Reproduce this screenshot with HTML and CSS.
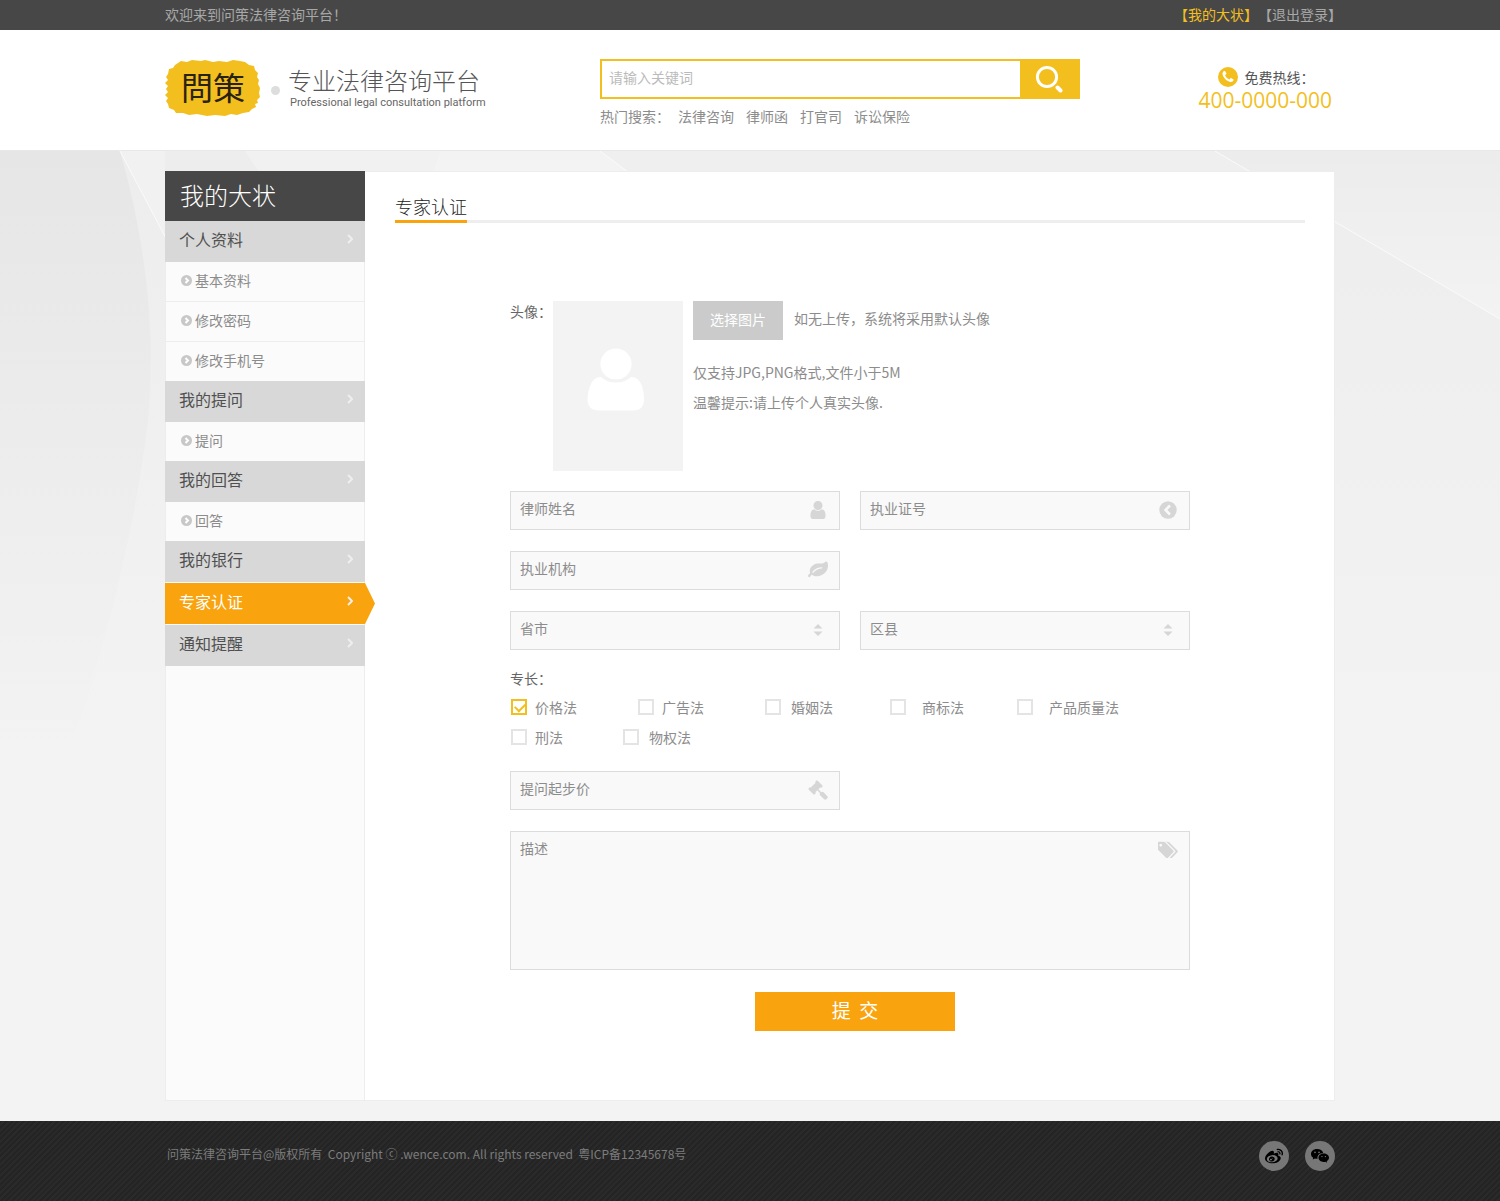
FILE: index.html
```html
<!DOCTYPE html>
<html lang="zh-CN">
<head>
    <meta charset="UTF-8">
    <meta name="viewport" content="width=device-width, initial-scale=1.0">
    <title>专家认证 - 问策法律咨询平台</title>
    <link rel="stylesheet" href="styles.css">
</head>
<body>
    <div class="topbar">
        <div class="container topbar-inner">
            <span>欢迎来到问策法律咨询平台！</span>
            <div class="topbar-links">
                <a href="#" class="current">【我的大状】</a>
                <a href="#">【退出登录】</a>
            </div>
        </div>
    </div>

    <header class="header">
        <div class="container header-inner">
            <a href="#" class="brand">
                <svg class="logo" viewBox="0 0 96 58" role="img" aria-label="問策">
                    <path fill="#f3bf1e" d="M10 6L16 2L22 3L27 1L36 2L40 1L48 3L54 2L62 3L68 1L75 2L80 3L84 6L89 7L90 11L93 14L92 18L94 21L93 25L95 29L94 34L95 38L92 41L93 44L90 45L91 48L87 50L84 53L78 54L72 56L66 55L60 57L50 56L42 57L32 55L24 56L18 54L11 54L9 51L4 49L3 45L1 42L3 39L0 36L3 33L1 30L3 27L0 24L3 21L1 18L3 15L4 10L8 9z"/>
                    <text class="logo-text" x="48" y="41" text-anchor="middle">問策</text>
                </svg>
                <span class="brand-dot"></span>
                <span class="brand-name">
                    <strong>专业法律咨询平台</strong>
                    <small>Professional legal consultation platform</small>
                </span>
            </a>

            <div class="search">
                <form class="search-form">
                    <input type="text" placeholder="请输入关键词" aria-label="请输入关键词">
                    <button type="button" aria-label="搜索">
                        <svg width="28" height="28" viewBox="0 0 28 28" fill="none" stroke="#fff" stroke-linecap="round">
                            <circle cx="12" cy="12" r="9.6" stroke-width="3"/>
                            <path d="M22.5 22.5l3 3" stroke-width="4"/>
                        </svg>
                    </button>
                </form>
                <div class="hot">
                    <span>热门搜索：</span>
                    <a href="#">法律咨询</a>
                    <a href="#">律师函</a>
                    <a href="#">打官司</a>
                    <a href="#">诉讼保险</a>
                </div>
            </div>

            <div class="hotline">
                <div class="hotline-label">
                    <svg width="20" height="20" viewBox="0 0 20 20">
                        <circle cx="10" cy="10" r="10" fill="#f3bf1e"/>
                        <svg x="3" y="3" width="14" height="14" viewBox="0 0 1792 1792"><path fill="#fff" d="M1600 1240q0 27-10 70.5t-21 68.5q-21 50-122 106-94 51-186 51-27 0-53-3.5t-57.5-12.5-47-14.5-55.5-20.5-49-18q-98-35-175-83-127-79-264-216t-216-264q-48-77-83-175-3-9-18-49t-20.5-55.5-14.5-47-12.5-57.5-3.5-53q0-92 51-186 56-101 106-122 25-11 68.5-21t70.5-10q14 0 21 3 18 6 53 76 11 19 30 54t35 63.5 31 53.5q3 4 17.5 25t21.5 35.5 7 28.5q0 20-28.5 50t-62 55-62 53-28.5 46q0 9 5 22.5t8.5 20.5 14 24 11.5 19q76 137 174 235t235 174q2 1 19 11.5t24 14 20.5 8.5 22.5 5q18 0 46-28.5t53-62 55-62 50-28.5q14 0 28.5 7t35.5 21.5 25 17.5q25 15 53.5 31t63.5 35 54 30q70 35 76 53 3 7 3 21z"/></svg>
                    </svg>
                    <span>免费热线：</span>
                </div>
                <div class="hotline-number">400-0000-000</div>
            </div>
        </div>
    </header>

    <div class="page">
        <!-- soft curves behind the panel -->
        <svg class="page-bg" viewBox="0 0 1500 970" preserveAspectRatio="xMidYMin slice" aria-hidden="true">
            <defs>
                <linearGradient id="fade" x1="0" y1="0" x2="0" y2="1">
                    <stop offset="0" stop-color="#ededed"/>
                    <stop offset="0.6" stop-color="#f3f3f3"/>
                </linearGradient>
                <linearGradient id="side" x1="0" y1="0" x2="0" y2="1">
                    <stop offset="0" stop-color="#e6e6e6"/>
                    <stop offset="1" stop-color="#f3f3f3"/>
                </linearGradient>
                <linearGradient id="corner" x1="0" y1="0" x2="0" y2="1">
                    <stop offset="0" stop-color="#ececec"/>
                    <stop offset="1" stop-color="#f3f3f3"/>
                </linearGradient>
            </defs>
            <rect width="1500" height="970" fill="url(#fade)"/>
            <path d="M0 0H120Q160 140 148 270Q130 420 70 600H0z" fill="url(#side)"/>
            <path d="M120 0L170 95V0z" fill="#f1f1f1"/>
            <path d="M165 0H245L265 30H165z" fill="#ededed"/>
            <path d="M245 0H440L430 30H265z" fill="#f1f1f1"/>
            <path d="M440 0H600L640 30H430z" fill="#f3f3f3"/>
            <path d="M600 0H1215L1265 30H640z" fill="#efefef"/>
            <path d="M1215 0H1500V168z" fill="url(#corner)"/>
            <path d="M120 0L170 95M600 0L640 30M1215 0L1500 168" stroke="#fafafa" fill="none"/>
        </svg>

        <div class="container panel">
            <nav class="sidebar">
                <h1>我的大状</h1>
                <a href="#" class="group">个人资料<svg viewBox="0 0 6 10"><path d="M1 1l4 4-4 4"/></svg></a>
                <ul>
                    <li><a href="#"><svg viewBox="0 0 11 11"><circle cx="5.5" cy="5.5" r="5.5"/><path d="M4.5 3l2.5 2.5L4.5 8"/></svg>基本资料</a></li>
                    <li><a href="#"><svg viewBox="0 0 11 11"><circle cx="5.5" cy="5.5" r="5.5"/><path d="M4.5 3l2.5 2.5L4.5 8"/></svg>修改密码</a></li>
                    <li><a href="#"><svg viewBox="0 0 11 11"><circle cx="5.5" cy="5.5" r="5.5"/><path d="M4.5 3l2.5 2.5L4.5 8"/></svg>修改手机号</a></li>
                </ul>
                <a href="#" class="group">我的提问<svg viewBox="0 0 6 10"><path d="M1 1l4 4-4 4"/></svg></a>
                <ul>
                    <li><a href="#"><svg viewBox="0 0 11 11"><circle cx="5.5" cy="5.5" r="5.5"/><path d="M4.5 3l2.5 2.5L4.5 8"/></svg>提问</a></li>
                </ul>
                <a href="#" class="group">我的回答<svg viewBox="0 0 6 10"><path d="M1 1l4 4-4 4"/></svg></a>
                <ul>
                    <li><a href="#"><svg viewBox="0 0 11 11"><circle cx="5.5" cy="5.5" r="5.5"/><path d="M4.5 3l2.5 2.5L4.5 8"/></svg>回答</a></li>
                </ul>
                <a href="#" class="group">我的银行<svg viewBox="0 0 6 10"><path d="M1 1l4 4-4 4"/></svg></a>
                <a href="#" class="group active">专家认证<svg viewBox="0 0 6 10"><path d="M1 1l4 4-4 4"/></svg></a>
                <a href="#" class="group">通知提醒<svg viewBox="0 0 6 10"><path d="M1 1l4 4-4 4"/></svg></a>
            </nav>

            <main class="content">
                <h2><span>专家认证</span></h2>

                <form class="expert-form">
                    <div class="avatar-row">
                        <span class="form-label">头像：</span>
                        <div class="avatar">
                            <svg width="58" height="64" viewBox="0 0 58 64" fill="#fff">
                                <circle cx="29" cy="16" r="15.6"/>
                                <path d="M14 29Q20 34.500 29 34.500T44 29Q52 29 55 38Q57 44 57 51Q57 62.500 46 62.500H12Q0.500 62.500 0.500 51Q0.500 44 3 38Q6 29 14 29z"/>
                            </svg>
                        </div>
                        <div class="avatar-info">
                            <div class="upload">
                                <button type="button">选择图片</button>
                                <span>如无上传，系统将采用默认头像</span>
                            </div>
                            <p>仅支持JPG,PNG格式,文件小于5M</p>
                            <p>温馨提示:请上传个人真实头像.</p>
                        </div>
                    </div>

                    <div class="fields">
                        <div class="field">
                            <input type="text" placeholder="律师姓名" aria-label="律师姓名">
                            <svg viewBox="48 48 1696 1696"><path d="M1536 1399q0 109-62.500 187t-150.500 78h-854q-88 0-150.500-78t-62.500-187q0-85 8.500-160.500t31.500-152 58.500-131 94-89 134.500-34.500q131 128 313 128t313-128q76 0 134.500 34.500t94 89 58.500 131 31.500 152 8.500 160.500zm-256-887q0 159-112.500 271.500t-271.500 112.500-271.500-112.500-112.500-271.500 112.500-271.500 271.500-112.500 271.500 112.500 112.500 271.500z"/></svg>
                        </div>
                        <div class="field">
                            <input type="text" placeholder="执业证号" aria-label="执业证号">
                            <svg viewBox="0 0 20 20"><circle cx="10" cy="10" r="8.700"/><path d="M12 5.500L7.500 10l4.500 4.500" fill="none" stroke="#f9f9f9" stroke-width="2.500"/></svg>
                        </div>
                        <div class="field first">
                            <input type="text" placeholder="执业机构" aria-label="执业机构">
                            <svg viewBox="0 0 1792 1792"><path d="M1280 704q0-26-19-45t-45-19q-172 0-318 49.500t-259.500 134-235.500 219.500q-19 21-19 45 0 26 19 45t45 19q24 0 45-19 27-24 74-71t67-66q137-124 268.500-176t313.500-52q26 0 45-19t19-45zm512-198q0 95-20 193-46 224-184.500 383t-357.500 268q-214 108-438 108-148 0-286-47-15-5-88-42t-96-37q-16 0-39.500 32t-45 70-52.500 70-60 32q-43 0-63.500-17.500t-45.500-59.500q-2-4-6-11t-5.500-10-3-9.500-1.500-13.500q0-35 31-73.500t68-65.500 68-56 31-48q0-4-14-38t-16-44q-9-51-9-104 0-115 43.500-220t119-184.500 170.500-139 204-95.500q55-18 145-25.500t179.500-9 178.500-6 163.500-24 113.500-56.500l29.500-29.500 29.500-28 27-20 36.500-16 43.500-4.500q39 0 70.500 46t47.500 112 24 124 8 96z"/></svg>
                        </div>
                        <div class="field first">
                            <select aria-label="省市"><option>省市</option></select>
                            <svg viewBox="0 0 20 20"><path d="M5.500 8.500L10 4l4.500 4.500zM5.500 11.500h9L10 16z"/></svg>
                        </div>
                        <div class="field">
                            <select aria-label="区县"><option>区县</option></select>
                            <svg viewBox="0 0 20 20"><path d="M5.500 8.500L10 4l4.500 4.500zM5.500 11.500h9L10 16z"/></svg>
                        </div>
                    </div>

                    <fieldset class="skills">
                        <legend class="form-label">专长：</legend>
                        <div class="checks">
                            <label><input type="checkbox" checked>价格法</label>
                            <label><input type="checkbox">广告法</label>
                            <label class="mid"><input type="checkbox">婚姻法</label>
                            <label class="wide"><input type="checkbox">商标法</label>
                            <label class="wide"><input type="checkbox">产品质量法</label>
                        </div>
                        <div class="checks checks-short">
                            <label><input type="checkbox">刑法</label>
                            <label class="mid"><input type="checkbox">物权法</label>
                        </div>
                    </fieldset>

                    <div class="fields">
                        <div class="field">
                            <input type="text" placeholder="提问起步价" aria-label="提问起步价">
                            <svg viewBox="0 0 1792 1792"><path d="M1771 1536q0 53-37 90l-107 108q-39 37-91 37-53 0-90-37l-363-364q-38-36-38-90 0-53 43-96l-256-256-126 126q-14 14-34 14t-34-14q2 2 12.500 12t12.500 13 10 11.500 10 13.500 6 13.500 5.500 16.500 1.500 18q0 38-28 68-3 3-16.500 18t-19 20.500-18.500 16.500-22 15.500-22 9-26 4.500q-40 0-68-28l-408-408q-28-28-28-68 0-13 4.500-26t9-22 15.500-22 16.500-18.500 20.500-19 18-16.500q30-28 68-28 10 0 18 1.500t16.500 5.500 13.500 6 13.500 10 11.500 10 13 12.500 12 12.500q-14-14-14-34t14-34l348-348q14-14 34-14t34 14q-2-2-12.500-12t-12.500-13-10-11.500-10-13.500-6-13.500-5.500-16.500-1.500-18q0-38 28-68 3-3 16.500-18t19-20.500 18.500-16.500 22-15.500 22-9 26-4.500q40 0 68 28l408 408q28 28 28 68 0 13-4.500 26t-9 22-15.500 22-16.500 18.500-20.500 19-18 16.500q-30 28-68 28-10 0-18-1.500t-16.500-5.500-13.500-6-13.500-10-11.500-10-13-12.500-12-12.500q14 14 14 34t-14 34l-126 126 256 256q43-43 96-43 52 0 91 37l363 363q37 39 37 91z"/></svg>
                        </div>
                        <div class="field field-area">
                            <textarea placeholder="描述" aria-label="描述"></textarea>
                            <svg viewBox="0 0 1850 1792"><path d="M384 448q0-53-37.500-90.500t-90.500-37.500-90.500 37.500-37.500 90.500 37.500 90.500 90.500 37.500 90.500-37.500 37.500-90.500zm1067 576q0 53-37 90l-491 492q-39 37-91 37-53 0-90-37l-715-716q-38-37-64.500-101t-26.500-117v-416q0-52 38-90t90-38h416q53 0 117 26.500t102 64.500l715 714q37 39 37 91zm384 0q0 53-37 90l-491 492q-39 37-91 37-36 0-59-14t-53-45l470-470q37-37 37-90 0-52-37-91l-715-714q-38-38-102-64.500t-117-26.500h224q53 0 117 26.500t102 64.500l715 714q37 39 37 91z"/></svg>
                        </div>
                    </div>

                    <div class="actions">
                        <button type="button">提&nbsp;&nbsp;交</button>
                    </div>
                </form>
            </main>
        </div>
    </div>

    <footer class="footer">
        <div class="container footer-inner">
            <p>问策法律咨询平台@版权所有&nbsp; Copyright ⓒ .wence.com. All rights reserved&nbsp; 粤ICP备12345678号</p>
            <div class="social">
                <a href="#" aria-label="微博">
                    <svg width="18" height="18" viewBox="0 0 1792 1792"><path d="M675 1284q21-34 11-69t-45-50q-34-14-73-1t-60 46q-22 34-13 68.500t43 50.500 74.500 2.500 62.500-47.500zm94-121q8-13 3.500-26.500t-17.500-18.500q-14-5-28.500.5t-21.500 18.500q-17 31 13 45 14 5 29-.5t22-18.500zm174 107q-45 102-158 150t-224 12q-107-34-147.500-126.500t6.500-187.500q47-93 151.500-139t210.500-19q111 29 158.500 119.500t2.500 190.500zm312-160q-9-96-89-170t-208.500-109-274.500-21q-223 23-369.500 141.500t-132.500 264.500q9 96 89 170t208.500 109 274.500 21q223-23 369.500-141.500t132.500-264.500zm308 4q0 68-37 139.500t-109 137-168.500 117.500-226 83-270.500 31-275-33.500-240.500-93-171.500-151-65-199.500q0-115 69.500-245t197.500-258q169-169 341.500-236t246.500 7q65 64 20 209-4 14-1 20t10 7 14.500-.5 13.500-3.500l6-2q139-59 246-59t153 61q45 63 0 178-2 13-4.500 20t4.500 12.500 12 7.500 17 6q57 18 103 47t80 81.500 34 116.500zm-74-624q42 47 54.500 108.500t-6.500 117.500q-8 23-29.500 34t-44.500 4q-23-8-34-29.500t-4-44.500q20-63-24-111t-107-35q-24 5-45-8t-25-37q-5-24 8-44.500t37-25.500q60-13 119 5.500t101 65.500zm181-163q87 96 112.500 222.500t-13.500 241.500q-9 27-34 40t-52 4-40-34-5-52q28-82 10-172t-80-158q-62-69-148-95.500t-173-8.500q-28 6-52-9.500t-30-43.500 9.500-51.500 43.500-29.500q123-26 244 11.500t208 134.500z"/></svg>
                </a>
                <a href="#" aria-label="微信">
                    <svg width="18" height="14" viewBox="0 0 18 14">
                        <path d="M6 0C2.500 0 0 2.200 0 4.900c0 1.600.8 2.900 2.200 3.800L1.700 10.500l2.200-1.100c.7.2 1.400.3 2.100.3h.6C6 6.800 8.300 4 12.200 4 11.600 1.600 9.100 0 6 0z"/>
                        <path d="M12.700 4.600C9.800 4.600 7.500 6.500 7.500 8.800s2.300 4.200 5.200 4.200c.6 0 1.200-.1 1.700-.2l1.700.9-.4-1.500c1.300-.8 2.300-2 2.300-3.400 0-2.300-2.400-4.200-5.300-4.200z"/>
                        <g fill="#777"><circle cx="4" cy="3.400" r=".8"/><circle cx="8" cy="3.400" r=".8"/><circle cx="11" cy="7.600" r=".7"/><circle cx="14.400" cy="7.600" r=".7"/></g>
                    </svg>
                </a>
            </div>
        </div>
    </footer>
</body>
</html>
```
FILE: styles.css
```css
* {
    box-sizing: border-box;
    margin: 0;
    padding: 0;
}
body {
    font-family: "Noto Sans CJK SC", "Open Sans", sans-serif;
    font-size: 14px;
    line-height: 20px;
    color: #8c8c8c;
    background: #f3f3f3;
    text-spacing-trim: space-all;
}
a {
    color: inherit;
    text-decoration: none;
}
ul {
    list-style: none;
}
input, select, textarea, button {
    font: inherit;
    color: inherit;
    border: none;
    background: none;
    outline: none;
}
button {
    cursor: pointer;
}
.container {
    max-width: 1170px;
    margin: 0 auto;
}

/* top bar */
.topbar {
    padding-bottom: 2px;
    background: #474747;
    color: #a8a8a8;
    line-height: 28px;
}
.topbar-inner {
    display: flex;
    justify-content: space-between;
}
.topbar-links {
    display: flex;
    margin-right: -7px;
}
.topbar-links .current {
    color: #f3bf1e;
}

/* header */
.header {
    background: #fff;
    border-bottom: 1px solid #e8e8e8;
}
.header-inner {
    display: grid;
    grid-template-columns: 435px 480px 1fr;
    padding: 29px 0 24px;
}
.brand {
    display: flex;
    align-items: flex-start;
}
.logo {
    width: 96px;
    height: 58px;
}
.logo-text {
    font-size: 32px;
    fill: #2a2211;
}
.brand-dot {
    width: 9px;
    height: 9px;
    margin: 27px 8px 0 10px;
    border-radius: 50%;
    background: #ddd;
}
.brand-name {
    display: flex;
    flex-direction: column;
    padding-top: 6px;
}
.brand-name strong {
    font-size: 24px;
    font-weight: 300;
    line-height: 30px;
    color: #555;
}
.brand-name small {
    padding-left: 2px;
    font-family: Roboto, sans-serif;
    font-size: 11px;
    line-height: 16px;
    color: #666;
}
.search-form {
    display: flex;
    height: 40px;
    border: 2px solid #f3bf1e;
}
.search-form input {
    flex: 1;
    padding: 0 7px 4px;
}
.search-form input::placeholder {
    color: #bbb;
}
.search-form button {
    display: flex;
    align-items: center;
    justify-content: center;
    width: 58px;
    background: #f3bf1e;
}
.hot {
    display: flex;
    gap: 12px;
    margin-top: 7px;
}
.hot span {
    margin-right: -4px;
}
.hotline {
    justify-self: end;
    padding: 8px 3px 0 0;
}
.hotline-label {
    display: flex;
    gap: 6px;
    padding-left: 20px;
    color: #555;
}
.hotline-number {
    font-family: "Open Sans", sans-serif;
    font-size: 21px;
    line-height: 26px;
    color: #f3bf1e;
}

/* page body */
.page {
    position: relative;
    padding: 20px 0;
}
.page-bg {
    position: absolute;
    top: 0;
    left: 0;
    width: 100%;
    height: 100%;
}
.panel {
    position: relative;
    display: grid;
    grid-template-columns: 200px 1fr;
}

/* sidebar */
.sidebar {
    background: #fbfbfb;
    box-shadow: inset 0 0 0 1px #ededed;
}
.sidebar h1 {
    padding-left: 15px;
    padding-bottom: 2px;
    font-size: 24px;
    font-weight: 300;
    line-height: 48px;
    color: #fff;
    background: #474747;
}
.group {
    position: relative;
    display: flex;
    align-items: center;
    justify-content: space-between;
    height: 41px;
    padding: 0 12px 5px 14px;
    font-size: 16px;
    color: #505050;
    background: #d8d8d8;
}
.group + .group {
    margin-top: 1px;
}
.group svg {
    width: 6px;
    height: 10px;
    fill: none;
    stroke: #eee;
    stroke-width: 2;
}
.group.active {
    color: #fff;
    background: #f9a30e;
    z-index: 1;
}
.group.active::after {
    content: "";
    position: absolute;
    top: 0;
    left: 100%;
    width: 10px;
    height: 100%;
    background: #f9a30e;
    clip-path: polygon(0 0, 100% 50%, 0 100%);
}
.sidebar li {
    margin: 0 1px;
    border-bottom: 1px solid #ededed;
}
.sidebar li:last-child {
    border-bottom: none;
}
.sidebar li a {
    display: flex;
    align-items: center;
    gap: 3px;
    height: 39px;
    padding: 0 0 3px 15px;
}
.sidebar li svg {
    width: 11px;
    height: 11px;
    fill: #c8c8c8;
}
.sidebar li path {
    fill: none;
    stroke: #fff;
    stroke-width: 2;
}

/* content */
.content {
    padding: 20px 29px 69px 30px;
    background: #fff;
    border: 1px solid #ededed;
    border-left: none;
}
.content h2 {
    display: flex;
    font-size: 18px;
    font-weight: 300;
    line-height: 28px;
    color: #222;
    border-bottom: 3px solid #eee;
}
.content h2 span {
    margin: 0 0 -3px;
    border-bottom: 3px solid #f9a30e;
}
.expert-form {
    max-width: 680px;
    margin: 78px auto 0;
}
.form-label {
    color: #666;
}
.avatar-row {
    display: flex;
}
.avatar-row .form-label {
    width: 43px;
    white-space: nowrap;
}
.avatar {
    display: flex;
    align-items: center;
    justify-content: center;
    width: 130px;
    height: 170px;
    margin-right: 10px;
    padding: 0 4px 12px 0;
    background: #f3f3f3;
}
.upload {
    display: flex;
    gap: 11px;
    margin-bottom: 17px;
    line-height: 35px;
}
.upload button {
    width: 90px;
    height: 39px;
    padding-bottom: 2px;
    color: #fff;
    background: #cbcbcb;
}
.avatar-info p {
    line-height: 30px;
}
.fields {
    display: grid;
    grid-template-columns: 1fr 1fr;
    gap: 21px 20px;
    margin-top: 20px;
}
.field {
    position: relative;
    height: 39px;
    background: #f9f9f9;
    border: 1px solid #dcdcdc;
}
.field.first {
    grid-column-start: 1;
}
.field input,
.field select {
    display: block;
    width: 100%;
    height: 100%;
    padding: 0 40px 6px 9px;
    appearance: none;
}
.field ::placeholder {
    color: #8c8c8c;
}
.field svg {
    position: absolute;
    top: 8px;
    right: 11px;
    width: 20px;
    height: 20px;
    fill: #d6d6d6;
    pointer-events: none;
}
.field-area {
    grid-column: 1 / -1;
    height: 139px;
}
.field-area textarea {
    display: block;
    width: 100%;
    height: 100%;
    padding: 6px 40px 6px 9px;
    resize: none;
}
.skills {
    margin-top: 14px;
    border: none;
}
.skills + .fields {
    margin-top: 19px;
}
.skills legend {
    line-height: 28px;
}
.checks {
    display: grid;
    grid-template-columns: 127px 127px 125px 127px 1fr;
    padding-left: 1px;
    line-height: 30px;
}
.checks-short {
    grid-template-columns: 112px 1fr;
}
.checks label {
    display: flex;
    align-items: center;
    gap: 8px;
}
.checks .mid {
    gap: 10px;
}
.checks .wide {
    gap: 16px;
}
.checks input {
    width: 16px;
    height: 16px;
    border: 2px solid #e4e4e4;
    appearance: none;
}
.checks input:checked {
    border-color: #f3bf1e;
}
.checks input:checked::before {
    content: "";
    display: block;
    width: 8px;
    height: 5px;
    margin: 2px;
    border: solid #f3bf1e;
    border-width: 0 0 2px 2px;
    transform: rotate(-45deg);
}
.actions {
    margin-top: 22px;
    padding-left: 10px;
    text-align: center;
}
.actions button {
    width: 200px;
    height: 39px;
    padding-bottom: 3px;
    font-size: 19px;
    color: #fff;
    background: #f9a30e;
}

/* footer */
.footer {
    color: #7c7c7c;
    background: repeating-linear-gradient(135deg, #242424 0, #242424 2px, #2a2a2a 2px, #2a2a2a 4px);
}
.footer-inner {
    display: flex;
    justify-content: space-between;
    min-height: 80px;
    padding: 20px 0 30px 2px;
}
.footer p {
    font-size: 12px;
    line-height: 25px;
}
.social {
    display: flex;
    gap: 16px;
}
.social a {
    display: flex;
    align-items: center;
    justify-content: center;
    width: 30px;
    height: 30px;
    background: #777;
    border-radius: 50%;
}
```
